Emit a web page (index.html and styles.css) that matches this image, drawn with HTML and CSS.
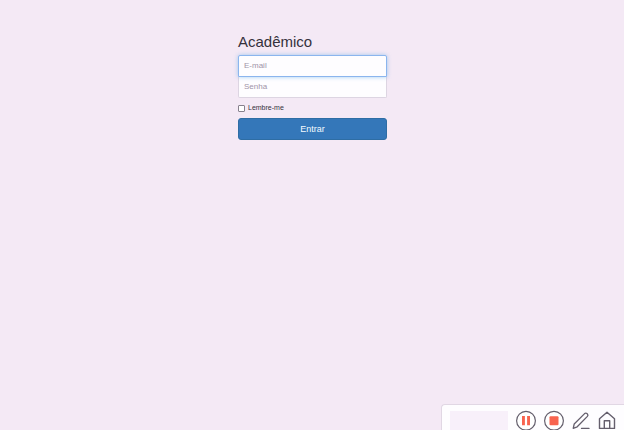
FILE: index.html
```html
<!DOCTYPE html>
<html lang="pt-BR">
<head>
<meta charset="utf-8">
<title>Acadêmico</title>
<link rel="stylesheet" href="styles.css">
</head>
<body>
<form class="signin">
  <h1 class="title">Acadêmico</h1>
  <input class="field field-email" type="text" placeholder="E-mail" aria-label="E-mail">
  <input class="field field-password" type="password" placeholder="Senha" aria-label="Senha">
  <label class="remember"><input class="check" type="checkbox"><span>Lembre-me</span></label>
  <button class="submit" type="button">Entrar</button>
</form>
<div class="recorder">
  <div class="preview"></div>
  <svg class="icon" width="22" height="22" viewBox="0 0 22 22"><circle cx="11" cy="10.7" r="9.4" fill="#fff" stroke="#655f6d" stroke-width="1.2"/><path d="M7 6h2.9v9.2H7zM12.1 6H15v9.2h-2.9z" fill="#f8644f"/></svg>
  <svg class="icon icon-stop" width="22" height="22" viewBox="0 0 22 22"><circle cx="11" cy="10.7" r="9.4" fill="#fff" stroke="#655f6d" stroke-width="1.2"/><rect x="6.5" y="6.2" width="9" height="9" rx="1" fill="#f8644f"/></svg>
  <svg class="icon icon-pen" width="18" height="20" viewBox="0 0 18 20" fill="none" stroke="#655f6d" stroke-width="1.3" stroke-linejoin="round" stroke-linecap="round"><path d="M1.2 18.3l1-4.3L12.6 3.6q1.2-1 2.4 0l.4.4q1.1 1.2 0 2.4L5.2 16.8zM9.5 18.4H17"/></svg>
  <svg class="icon icon-home" width="18" height="20" viewBox="0 0 18 20" fill="none" stroke="#655f6d" stroke-width="1.4" stroke-linejoin="round"><path d="M1.5 8.8L9 2.2l7.5 6.6v9.6h-15zM6.3 18.4V10.8h5.4v7.6"/></svg>
</div>
</body>
</html>
```
FILE: styles.css
```css
* {
  box-sizing: border-box;
}

body {
  display: flex;
  flex-direction: column;
  justify-content: space-between;
  height: 430px;
  margin: 0;
  overflow: hidden;
  background: #f4e9f5;
  color: #35313c;
  font-family: "Liberation Sans", Arial, sans-serif;
}

.signin {
  display: flex;
  flex-direction: column;
  width: 149px;
  margin: 33px 0 0 238px;
}

.title {
  margin: 0 0 4px;
  font-size: 15px;
  font-weight: 400;
  line-height: 18px;
}

.field {
  width: 100%;
  height: 22px;
  margin: 0;
  padding: 0 5px 1px;
  border: 1px solid #ddd5e2;
  background: #fefdff;
  font: 8px "Liberation Sans", Arial, sans-serif;
  outline: none;
}

.field::placeholder {
  color: #a093a8;
}

.field-email {
  position: relative;
  border-color: #8bb5ee;
  border-radius: 2px 2px 0 0;
  box-shadow: 0 0 4px rgba(102, 175, 233, 0.6);
}

.field-password {
  height: 21px;
  border-top: 0;
  border-radius: 0 0 2px 2px;
}

.remember {
  display: flex;
  align-items: center;
  gap: 3px;
  height: 8px;
  margin: 6px 0;
  font-size: 7px;
  line-height: 8px;
}

.check {
  appearance: none;
  width: 7px;
  height: 7px;
  margin: 0;
  border: 1px solid #87818d;
  border-radius: 1px;
  background: #fff;
}

.submit {
  height: 22px;
  padding: 0;
  border: 1px solid #2e6da4;
  border-radius: 3px;
  background: #3477b9;
  color: #f3faff;
  font: 9px "Liberation Sans", Arial, sans-serif;
}

.recorder {
  display: flex;
  align-items: flex-start;
  align-self: flex-end;
  width: 183px;
  height: 26px;
  padding: 5px 0 0 8px;
  border: 1px solid #e1d7e4;
  border-width: 1px 0 0 1px;
  border-radius: 4px 0 0;
  background: #fefdff;
}

.preview {
  width: 58px;
  height: 20px;
  margin: 1px 7px 0 0;
  background: #f8f0fa;
}

.icon {
  flex: none;
}

.icon-stop {
  margin-left: 5.5px;
}

.icon-pen {
  margin-left: 7.5px;
}

.icon-home {
  margin-left: 8px;
}
```
